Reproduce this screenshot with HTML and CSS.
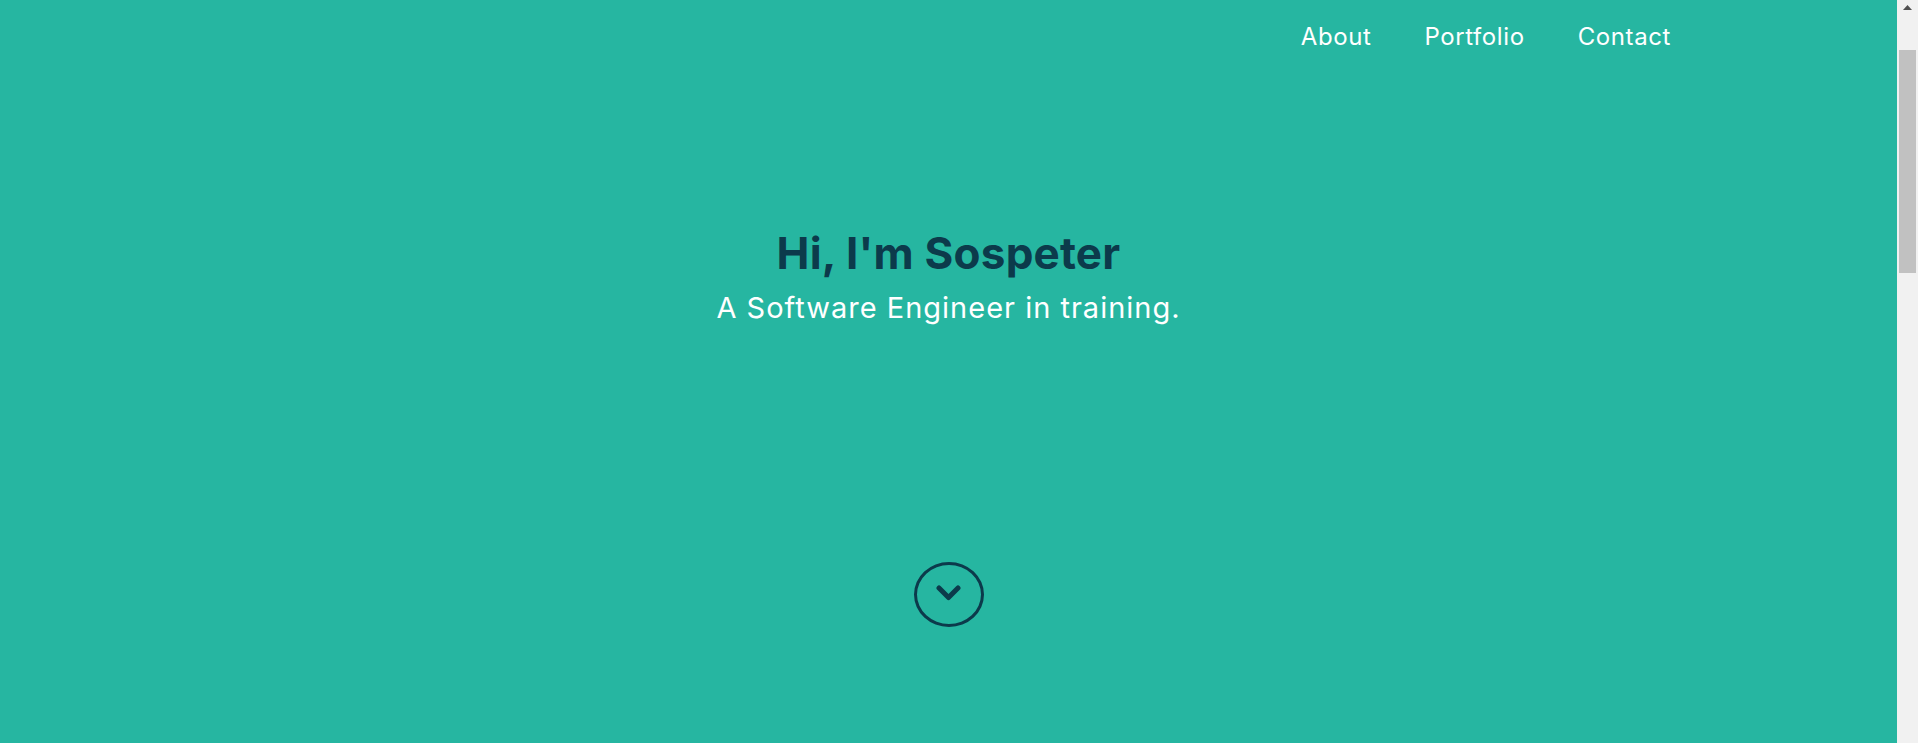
FILE: index.html
```html
<!DOCTYPE html>
<html lang="en">
<head>
<meta charset="utf-8">
<title>Sospeter</title>
<link rel="stylesheet" href="styles.css">
</head>
<body>
<div class="page">
  <header class="site-header">
    <nav class="nav">
      <a class="nav-link" href="#about">About</a>
      <a class="nav-link" href="#portfolio">Portfolio</a>
      <a class="nav-link" href="#contact">Contact</a>
    </nav>
  </header>
  <main>
    <section class="hero">
      <h1 class="hero-title">Hi, I'm Sospeter</h1>
      <p class="hero-subtitle">A Software Engineer in training.</p>
      <a class="scroll-down" href="#about" aria-label="Scroll down">
        <svg class="chevron" viewBox="0 0 25 17" width="25" height="17" aria-hidden="true">
          <polyline points="3,3 12.5,12.5 22,3" fill="none" stroke="currentColor" stroke-width="5" stroke-linecap="round" stroke-linejoin="round"/>
        </svg>
      </a>
    </section>
    <section class="section" id="about"></section>
    <section class="section" id="portfolio"></section>
    <section class="section" id="contact"></section>
  </main>
</div>
<div class="scrollbar" aria-hidden="true">
  <svg class="scroll-arrow" viewBox="0 0 9 5" width="9" height="5">
    <polygon points="0,5 4.5,0 9,5" fill="#505050"/>
  </svg>
  <div class="scroll-thumb"></div>
</div>
</body>
</html>
```
FILE: styles.css
```css
html,
body {
  height: 100%;
}
body {
  margin: 0;
  display: flex;
  overflow: hidden;
  background: #26b6a1;
  font-family: Inter, "Open Sans", sans-serif;
  color: #ffffff;
}

.page {
  flex: 1;
  min-width: 0;
  overflow: hidden;
  background: #26b6a1;
}

.scrollbar {
  width: 21px;
  flex: none;
  background: #f1f1f1;
  display: flex;
  flex-direction: column;
  align-items: center;
}
.scroll-arrow {
  display: block;
  margin-top: 5px;
}
.scroll-thumb {
  margin-top: 40px;
  width: 17px;
  height: 223px;
  background: #c1c1c1;
}

.site-header {
  padding: 22px 226px 0 0;
}
.nav {
  display: flex;
  justify-content: flex-end;
  gap: 53px;
}
.nav-link {
  color: #ffffff;
  text-decoration: none;
  font-size: 24px;
  line-height: 29px;
  letter-spacing: 0.6px;
}

.hero {
  display: flex;
  flex-direction: column;
  align-items: center;
  padding-top: 176px;
  height: 692px;
  box-sizing: border-box;
}
.hero-title {
  margin: 0;
  font-size: 44px;
  line-height: 53px;
  font-weight: 700;
  letter-spacing: 0.2px;
  color: #0c3a4b;
}
.hero-subtitle {
  margin: 11px 0 0;
  font-size: 29px;
  line-height: 34px;
  font-weight: 400;
  letter-spacing: 1px;
}
.scroll-down {
  margin-top: 237px;
  width: 64px;
  height: 59px;
  border: 3px solid #0c3a4b;
  border-radius: 50%;
  display: flex;
  align-items: center;
  justify-content: center;
  color: #0c3a4b;
}
.chevron {
  display: block;
  margin-top: -2px;
}

.section {
  height: 522px;
}
```
